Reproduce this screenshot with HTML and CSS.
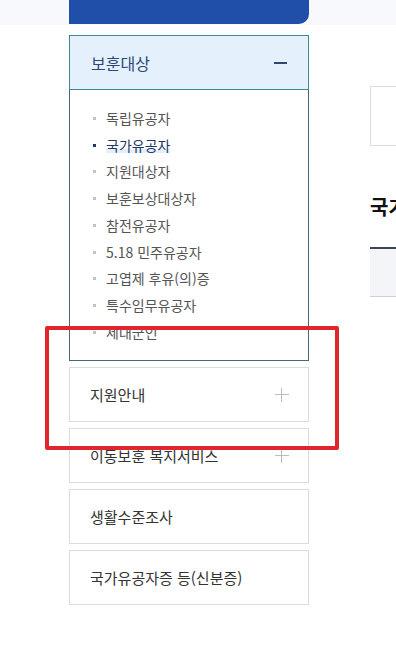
FILE: index.html
```html
<!DOCTYPE html>
<html lang="ko">
<head>
  <meta charset="UTF-8">
  <title>보훈대상</title>
  <link rel="stylesheet" href="styles.css">
</head>
<body>

  <div class="top-strip">
    <div class="top-bar"></div>
  </div>

  <div class="layout">
    <nav class="side-menu">
      <div class="menu-group open">
        <div class="menu-head">
          <span>보훈대상</span>
          <span class="toggle minus"></span>
        </div>
        <ul class="sub-list">
          <li>독립유공자</li>
          <li class="active"><span>국가유공자</span></li>
          <li>지원대상자</li>
          <li>보훈보상대상자</li>
          <li>참전유공자</li>
          <li>5.18 민주유공자</li>
          <li>고엽제 후유(의)증</li>
          <li>특수임무유공자</li>
          <li>제대군인</li>
        </ul>
      </div>

      <div class="menu-group">
        <div class="menu-head">
          <span>지원안내</span>
          <span class="toggle plus"></span>
        </div>
      </div>
      <div class="menu-group">
        <div class="menu-head">
          <span>이동보훈 복지서비스</span>
          <span class="toggle plus"></span>
        </div>
      </div>
      <div class="menu-group">
        <div class="menu-head">
          <span>생활수준조사</span>
        </div>
      </div>
      <div class="menu-group">
        <div class="menu-head">
          <span>국가유공자증 등(신분증)</span>
        </div>
      </div>
    </nav>

    <main class="content">
      <div class="search-box"></div>
      <h2 class="page-title">국가유공자</h2>
      <div class="table-head"></div>
    </main>
  </div>

  <div class="highlight-mark"></div>

</body>
</html>
```

FILE: styles.css
```css
:root {
  --navy: #1f4fa8;
  --text: #333;
  --text-muted: #555;
  --line: #dcdcdc;
  --head-bg: #e4f1fc;
}

* {
  box-sizing: border-box;
}

body {
  margin: 0;
  background: #fff;
  color: var(--text);
  font-family: "Noto Sans CJK KR", "Noto Sans", sans-serif;
  width: 396px;
  height: 667px;
  overflow: hidden;
  position: relative;
}

.top-strip {
  height: 25px;
  background: #f7f9fc;
  padding-left: 69px;
}

.top-bar {
  width: 240px;
  height: 24px;
  background: var(--navy);
  border-bottom-right-radius: 10px;
}

.layout {
  display: flex;
  gap: 61px;
  padding-left: 69px;
  padding-top: 10px;
}

.side-menu {
  width: 240px;
  flex-shrink: 0;
  display: flex;
  flex-direction: column;
  gap: 6px;
}

.menu-group {
  border: 1px solid var(--line);
}

.menu-head {
  height: 53px;
  display: flex;
  align-items: center;
  justify-content: space-between;
  padding: 0 19px 0 20px;
  font-size: 15px;
  color: var(--text);
}

.menu-group.open {
  border-color: #4a6479;
}

.menu-group.open .menu-head {
  background: var(--head-bg);
  border-bottom: 1px solid #3d8a8e;
  border-top: 1px solid #3d8a8e;
  margin: -1px -1px 0;
  border-left: 1px solid #3d8a8e;
  border-right: 1px solid #3d8a8e;
  height: 55px;
  padding-left: 21px;
  padding-right: 20px;
  color: #2b4775;
  font-size: 16px;
}

.toggle {
  position: relative;
  width: 14px;
  height: 14px;
}

.toggle::before,
.toggle::after {
  content: "";
  position: absolute;
  background: #bdbdbd;
}

.toggle::before {
  left: 0;
  top: 6px;
  width: 14px;
  height: 1px;
}

.toggle.plus::after {
  left: 6px;
  top: 0;
  width: 1px;
  height: 14px;
}

.toggle.minus::before {
  background: #2d4a6e;
  height: 2px;
  width: 13px;
}

.sub-list {
  list-style: none;
  margin: 0;
  padding: 15px 0 15px 23px;
}

.sub-list li {
  position: relative;
  padding-left: 13px;
  line-height: 26.7px;
  font-size: 14px;
  color: var(--text-muted);
}

.sub-list li::before {
  content: "";
  position: absolute;
  left: 0;
  top: 12px;
  width: 3px;
  height: 3px;
  background: #c4c4c4;
}

.sub-list li.active {
  color: #1e3966;
}

.sub-list li.active::before {
  background: #1e3966;
}

.sub-list li.active span {
  background: linear-gradient(transparent 72%, #e3f0fb 72%, #e3f0fb 90%, transparent 90%);
}

.content {
  flex: 1;
  padding-top: 51px;
}

.search-box {
  height: 60px;
  width: 200px;
  border: 1px solid var(--line);
  border-right: none;
}

.page-title {
  margin: 49px 0 0;
  font-size: 20px;
  font-weight: 700;
  color: #111;
  white-space: nowrap;
  line-height: 24px;
}

.table-head {
  margin-top: 28px;
  height: 50px;
  width: 200px;
  background: #f4f5f8;
  border-top: 2px solid #3c4653;
  border-bottom: 1px solid #cfcfcf;
}

.highlight-mark {
  position: absolute;
  left: 45px;
  top: 326px;
  width: 294px;
  height: 124px;
  border: 4px solid #e2262d;
  border-radius: 2px;
}
```
